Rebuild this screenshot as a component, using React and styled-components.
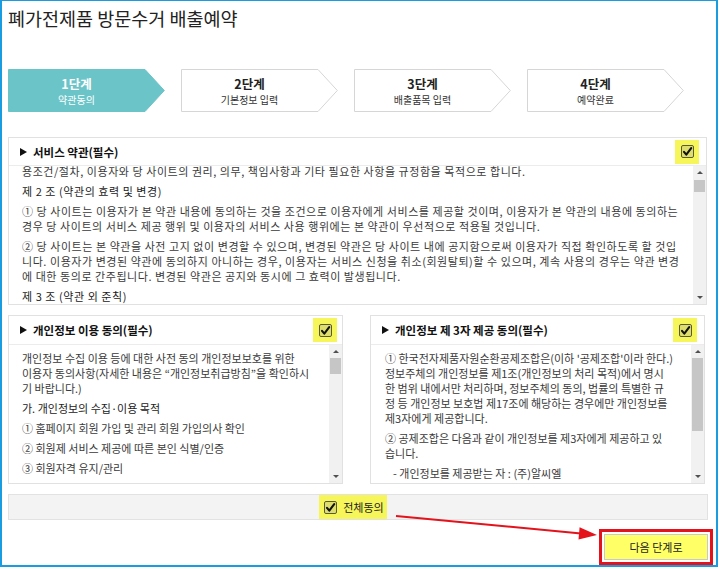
import React from 'react';
import styled, { createGlobalStyle } from 'styled-components';

const GlobalStyle = createGlobalStyle`
  html, body { margin: 0; padding: 0; background: #fff; }
  body { font-family: "Noto Sans CJK KR", "Noto Sans", sans-serif; color: #333; }
  * { box-sizing: border-box; }
`;

const Frame = styled.div`
  position: relative;
  width: 718px;
  height: 567px;
  border: 2px solid #1a9de0;
  border-top-width: 1px;
  padding: 7px 3px 0 6px;
  display: flex;
  flex-direction: column;
  background: #fff;
`;

const Title = styled.h1`
  margin: 0;
  font-size: 18.5px;
  line-height: 20px;
  font-weight: 400;
  color: #222;
`;

const Steps = styled.ol`
  list-style: none;
  margin: 41px 0 0;
  padding: 0;
  display: flex;
  gap: 16px;
`;

const StepItem = styled.li`
  position: relative;
  width: 157px;
  height: 43px;
`;

const StepShape = styled.svg`
  position: absolute;
  inset: 0;
  width: 100%;
  height: 100%;
`;

const StepText = styled.div`
  position: relative;
  width: 137px;
  height: 100%;
  display: flex;
  flex-direction: column;
  align-items: center;
  justify-content: center;
  padding-top: 2px;
  color: ${p => (p.$active ? '#fff' : '#222')};
`;

const StepNo = styled.strong`
  font-size: 12.5px;
  line-height: 16px;
  font-weight: 700;
`;

const StepName = styled.span`
  font-size: 10px;
  line-height: 15px;
  color: ${p => (p.$active ? '#fff' : '#333')};
`;

const Panel = styled.section`
  width: ${p => p.$w}px;
  height: ${p => p.$h}px;
  border: 1px solid #e1e1e1;
  background: #fff;
  display: flex;
  flex-direction: column;
`;

const PanelHead = styled.header`
  flex: none;
  height: ${p => p.$h}px;
  display: flex;
  align-items: center;
  justify-content: space-between;
  padding: 0 ${p => p.$pr}px 0 11px;
  border-bottom: 1px solid #ececec;
`;

const HeadLabel = styled.h2`
  margin: 0;
  display: flex;
  align-items: center;
  gap: 6px;
  font-size: 11.5px;
  line-height: 14px;
  font-weight: 700;
  color: #111;
`;

const Marker = styled.span`
  width: 0;
  height: 0;
  border-left: 7px solid #111;
  border-top: 4px solid transparent;
  border-bottom: 4px solid transparent;
`;

const Highlight = styled.span`
  width: 24px;
  height: 24px;
  background: #f6f65b;
  display: flex;
  align-items: center;
  justify-content: center;
`;

const PanelBody = styled.div`
  flex: 1;
  min-height: 0;
  display: flex;
`;

const TextArea = styled.div`
  flex: 1;
  min-width: 0;
  overflow: hidden;
  padding: ${p => p.$top}px 8px 0 ${p => p.$left}px;
  font-size: 11px;
  letter-spacing: ${p => p.$spacing}px;
  line-height: 15px;
  color: #3a3a3a;
`;

const Scrolled = styled.div`
  margin-top: ${p => -p.$offset}px;
`;

const Para = styled.p`
  margin: 0 0 5px;
  padding-left: ${p => p.$indent || 0}px;
  color: ${p => (p.$strong ? '#222' : 'inherit')};
`;

const Line = styled.span`
  display: block;
  white-space: nowrap;
`;

const Track = styled.div`
  flex: none;
  width: 13px;
  background: #f1f1f1;
  display: flex;
  flex-direction: column;
`;

const ArrowBtn = styled.div`
  flex: none;
  height: 13px;
  display: flex;
  align-items: center;
  justify-content: center;
  &::before {
    content: '';
    width: 0;
    height: 0;
    border-left: 3px solid transparent;
    border-right: 3px solid transparent;
    ${p => (p.$down ? 'border-top: 3px solid #505050;' : 'border-bottom: 3px solid #505050;')}
  }
`;

const ThumbArea = styled.div`
  flex: 1;
`;

const Thumb = styled.div`
  margin: ${p => p.$top}px 1px 0 1px;
  height: ${p => p.$h}px;
  background: #c6c6c6;
`;

const TopSection = styled.div`
  margin-top: 25px;
`;

const LowerRow = styled.div`
  margin-top: 10px;
  display: grid;
  grid-template-columns: 335px 335px;
  column-gap: 27px;
`;

const AgreeBar = styled.div`
  margin-top: 10px;
  width: 700px;
  height: 26px;
  border: 1px solid #e2e2e2;
  background: #f3f3f3;
  display: flex;
  align-items: center;
  justify-content: center;
  padding-right: 10px;
`;

const AgreeAll = styled.label`
  height: 24px;
  background: #f6f65b;
  display: flex;
  align-items: center;
  gap: 6px;
  padding: 0 3px 0 5px;
  font-size: 11px;
  color: #222;
`;

const Footer = styled.div`
  margin-top: 9px;
  display: flex;
  justify-content: flex-end;
`;

const Annotated = styled.div`
  border: 3px solid #e3121b;
  padding: 2px;
  background: #fff;
`;

const NextButton = styled.button`
  display: block;
  width: 104px;
  height: 26px;
  padding: 0;
  border: 1px solid #c9c9c9;
  background: #ffff66;
  font-family: inherit;
  font-size: 11px;
  color: #222;
`;

const Overlay = styled.svg`
  position: absolute;
  left: 0;
  top: 0;
  width: 100%;
  height: 100%;
  pointer-events: none;
  overflow: visible;
`;

const CheckBox = () => (
  <svg width="13" height="13" viewBox="0 0 13 13">
    <rect x="0.5" y="0.5" width="12" height="12" rx="1.5" fill="#dede6e" stroke="#5a5a3a" />
    <path d="M3 6.8 L5.3 9.6 L10.2 3.2" fill="none" stroke="#111" strokeWidth="2.1" strokeLinecap="round" strokeLinejoin="round" />
  </svg>
);

const steps = [
  { no: '1단계', name: '약관동의', active: true },
  { no: '2단계', name: '기본정보 입력' },
  { no: '3단계', name: '배출품목 입력' },
  { no: '4단계', name: '예약완료' },
];

const termsParas = [
  { lines: ['용조건/절차, 이용자와 당 사이트의 권리, 의무, 책임사항과 기타 필요한 사항을 규정함을 목적으로 합니다.'] },
  { lines: ['제 2 조 (약관의 효력 및 변경)'], strong: true },
  {
    lines: [
      '① 당 사이트는 이용자가 본 약관 내용에 동의하는 것을 조건으로 이용자에게 서비스를 제공할 것이며, 이용자가 본 약관의 내용에 동의하는',
      '경우 당 사이트의 서비스 제공 행위 및 이용자의 서비스 사용 행위에는 본 약관이 우선적으로 적용될 것입니다.',
    ],
  },
  {
    lines: [
      '② 당 사이트는 본 약관을 사전 고지 없이 변경할 수 있으며, 변경된 약관은 당 사이트 내에 공지함으로써 이용자가 직접 확인하도록 할 것입',
      '니다. 이용자가 변경된 약관에 동의하지 아니하는 경우, 이용자는 서비스 신청을 취소(회원탈퇴)할 수 있으며, 계속 사용의 경우는 약관 변경',
      '에 대한 동의로 간주됩니다. 변경된 약관은 공지와 동시에 그 효력이 발생됩니다.',
    ],
  },
  { lines: ['제 3 조 (약관 외 준칙)'], strong: true },
];

const privacyParas = [
  {
    lines: [
      '개인정보 수집 이용 등에 대한 사전 동의 개인정보보호를 위한',
      '이용자 동의사항(자세한 내용은 “개인정보취급방침”을 확인하시',
      '기 바랍니다.)',
    ],
  },
  { lines: ['가. 개인정보의 수집·이용 목적'], strong: true },
  { lines: ['① 홈페이지 회원 가입 및 관리 회원 가입의사 확인'] },
  { lines: ['② 회원제 서비스 제공에 따른 본인 식별/인증'] },
  { lines: ['③ 회원자격 유지/관리'] },
];

const thirdParas = [
  {
    lines: [
      "① 한국전자제품자원순환공제조합은(이하 '공제조합'이라 한다.)",
      '정보주체의 개인정보를 제1조(개인정보의 처리 목적)에서 명시',
      '한 범위 내에서만 처리하며, 정보주체의 동의, 법률의 특별한 규',
      '정 등 개인정보 보호법 제17조에 해당하는 경우에만 개인정보를',
      '제3자에게 제공합니다.',
    ],
  },
  { lines: ['② 공제조합은 다음과 같이 개인정보를 제3자에게 제공하고 있', '습니다.'] },
  { lines: ['- 개인정보를 제공받는 자 : (주)알씨엘'], indent: 8 },
];

const AgreePanel = ({ title, w, h, headH, headPr, paras, textTop, textLeft, spacing, offset, thumbTop, thumbH }) => (
  <Panel $w={w} $h={h}>
    <PanelHead $h={headH} $pr={headPr}>
      <HeadLabel>
        <Marker />
        {title}
      </HeadLabel>
      <Highlight>
        <CheckBox />
      </Highlight>
    </PanelHead>
    <PanelBody>
      <TextArea $top={textTop} $left={textLeft} $spacing={spacing}>
        <Scrolled $offset={offset}>
          {paras.map((p, i) => (
            <Para key={i} $strong={p.strong} $indent={p.indent}>
              {p.lines.map((l, j) => (
                <Line key={j}>{l}</Line>
              ))}
            </Para>
          ))}
        </Scrolled>
      </TextArea>
      <Track>
        <ArrowBtn />
        <ThumbArea>
          <Thumb $top={thumbTop} $h={thumbH} />
        </ThumbArea>
        <ArrowBtn $down />
      </Track>
    </PanelBody>
  </Panel>
);

export default function App() {
  return (
    <>
      <GlobalStyle />
      <Frame>
        <Title>폐가전제품 방문수거 배출예약</Title>
        <Steps>
          {steps.map(s => (
            <StepItem key={s.no}>
              <StepShape viewBox="0 0 157 43" preserveAspectRatio="none">
                <polygon
                  points="0.5,0.5 137,0.5 156.3,21.5 137,42.5 0.5,42.5"
                  fill={s.active ? '#6bc4c8' : '#fff'}
                  stroke={s.active ? '#6bc4c8' : '#d6d6d6'}
                />
              </StepShape>
              <StepText $active={s.active}>
                <StepNo>{s.no}</StepNo>
                <StepName $active={s.active}>{s.name}</StepName>
              </StepText>
            </StepItem>
          ))}
        </Steps>
        <TopSection>
          <AgreePanel
            title="서비스 약관(필수)"
            w={699}
            h={168}
            headH={28}
            headPr={7}
            paras={termsParas}
            textTop={0}
            textLeft={13}
            spacing={0.55}
            offset={2}
            thumbTop={1}
            thumbH={12}
          />
        </TopSection>
        <LowerRow>
          <AgreePanel
            title="개인정보 이용 동의(필수)"
            w={335}
            h={169}
            headH={29}
            headPr={5}
            paras={privacyParas}
            textTop={6}
            textLeft={13}
            spacing={0}
            offset={0}
            thumbTop={0}
            thumbH={16}
          />
          <AgreePanel
            title="개인정보 제 3자 제공 동의(필수)"
            w={335}
            h={169}
            headH={29}
            headPr={7}
            paras={thirdParas}
            textTop={6}
            textLeft={14}
            spacing={0}
            offset={0}
            thumbTop={0}
            thumbH={73}
          />
        </LowerRow>
        <AgreeBar>
          <AgreeAll>
            <CheckBox />
            전체동의
          </AgreeAll>
        </AgreeBar>
        <Footer>
          <Annotated>
            <NextButton type="button">다음 단계로</NextButton>
          </Annotated>
        </Footer>
        <Overlay>
          <line x1="394" y1="515" x2="579" y2="532.4" stroke="#e3121b" strokeWidth="2" />
          <polygon points="595,534 576.5,538.5 577.6,526.2" fill="#e3121b" />
        </Overlay>
      </Frame>
    </>
  );
}
